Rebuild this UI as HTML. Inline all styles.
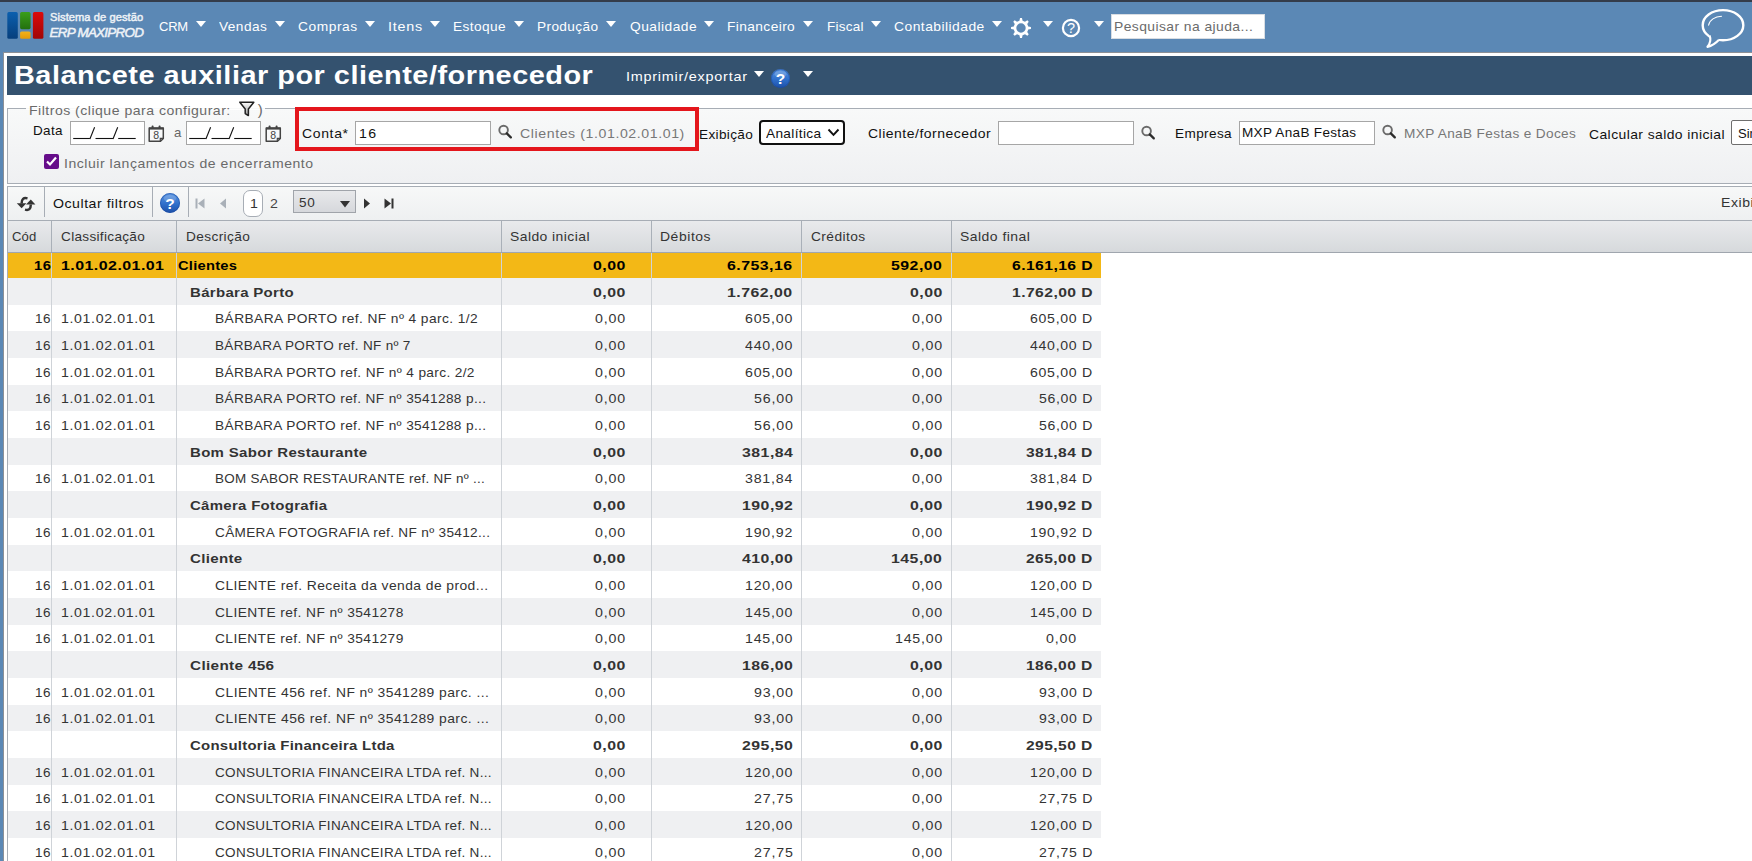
<!DOCTYPE html>
<html><head><meta charset="utf-8"><title>Balancete auxiliar por cliente/fornecedor</title>
<style>
html,body{margin:0;padding:0;}
body{width:1752px;height:861px;overflow:hidden;position:relative;background:#fff;font-family:"Liberation Sans",sans-serif;}
.r{position:absolute;display:block;}
.t{position:absolute;white-space:nowrap;line-height:1.117;transform-origin:0 0;font-family:"Liberation Sans",sans-serif;}
</style></head><body>
<div class="r" style="left:0px;top:0px;width:1752px;height:2px;background:#343c4a"></div>
<div class="r" style="left:0px;top:2px;width:1752px;height:50px;background:#5b88b5"></div>
<svg class="r" style="left:6px;top:11px;" width="40" height="30" viewBox="0 0 40 30"><defs>
<linearGradient id="lb" x1="0" y1="0" x2="0" y2="1"><stop offset="0" stop-color="#0a5fae"/><stop offset="1" stop-color="#073f7c"/></linearGradient>
<linearGradient id="lg" x1="0" y1="0" x2="0" y2="1"><stop offset="0" stop-color="#3a9e1a"/><stop offset="1" stop-color="#23700f"/></linearGradient>
<linearGradient id="ly" x1="0" y1="0" x2="0" y2="1"><stop offset="0" stop-color="#f3b21a"/><stop offset="1" stop-color="#e29a0a"/></linearGradient>
<linearGradient id="lr" x1="0" y1="0" x2="0" y2="1"><stop offset="0" stop-color="#dc0a0a"/><stop offset="1" stop-color="#a00606"/></linearGradient>
</defs>
<rect x="1.3" y="1.1" width="10.5" height="26.7" rx="1.6" fill="url(#lb)"/>
<rect x="14.1" y="1.1" width="10.5" height="17.1" rx="1.6" fill="url(#lg)"/>
<rect x="14.1" y="20.5" width="10.5" height="7.3" rx="1.6" fill="url(#ly)"/>
<rect x="26.9" y="1.1" width="10.5" height="26.7" rx="1.6" fill="url(#lr)"/></svg>
<div class="t" style="left:50.00px;top:11.04px;font-size:11px;letter-spacing:0.062px;color:#eef2f6;transform:scaleX(1.0109);-webkit-text-stroke:0.45px #eef2f6;">Sistema de gestão</div>
<div class="t" style="left:49.50px;top:25.28px;font-size:13.5px;letter-spacing:-0.773px;color:#eef2f7;font-style:italic;-webkit-text-stroke:0.5px #eef2f7;">ERP MAXIPROD</div>
<div class="t" style="left:159.00px;top:20.23px;font-size:13px;letter-spacing:-0.250px;color:#ffffff;">CRM</div>
<svg class="r" style="left:196px;top:21px;" width="10" height="6" viewBox="0 0 10 6"><polygon points="0,0 10,0 5.0,6" fill="#fff"/></svg>
<div class="t" style="left:219.30px;top:20.23px;font-size:13px;letter-spacing:0.439px;color:#ffffff;transform:scaleX(1.0505);">Vendas</div>
<svg class="r" style="left:275px;top:21px;" width="10" height="6" viewBox="0 0 10 6"><polygon points="0,0 10,0 5.0,6" fill="#fff"/></svg>
<div class="t" style="left:298.00px;top:20.23px;font-size:13px;letter-spacing:0.522px;color:#ffffff;transform:scaleX(1.0594);">Compras</div>
<svg class="r" style="left:365px;top:21px;" width="10" height="6" viewBox="0 0 10 6"><polygon points="0,0 10,0 5.0,6" fill="#fff"/></svg>
<div class="t" style="left:388.00px;top:20.23px;font-size:13px;letter-spacing:0.720px;color:#ffffff;transform:scaleX(1.1019);">Itens</div>
<svg class="r" style="left:430px;top:21px;" width="10" height="6" viewBox="0 0 10 6"><polygon points="0,0 10,0 5.0,6" fill="#fff"/></svg>
<div class="t" style="left:453.40px;top:20.23px;font-size:13px;letter-spacing:0.394px;color:#ffffff;transform:scaleX(1.0496);">Estoque</div>
<svg class="r" style="left:514px;top:21px;" width="10" height="6" viewBox="0 0 10 6"><polygon points="0,0 10,0 5.0,6" fill="#fff"/></svg>
<div class="t" style="left:537.30px;top:20.23px;font-size:13px;letter-spacing:0.373px;color:#ffffff;transform:scaleX(1.0469);">Produção</div>
<svg class="r" style="left:606px;top:21px;" width="10" height="6" viewBox="0 0 10 6"><polygon points="0,0 10,0 5.0,6" fill="#fff"/></svg>
<div class="t" style="left:629.70px;top:20.23px;font-size:13px;letter-spacing:0.446px;color:#ffffff;transform:scaleX(1.0602);">Qualidade</div>
<svg class="r" style="left:704px;top:21px;" width="10" height="6" viewBox="0 0 10 6"><polygon points="0,0 10,0 5.0,6" fill="#fff"/></svg>
<div class="t" style="left:727.20px;top:20.23px;font-size:13px;letter-spacing:0.381px;color:#ffffff;transform:scaleX(1.0564);">Financeiro</div>
<svg class="r" style="left:803px;top:21px;" width="10" height="6" viewBox="0 0 10 6"><polygon points="0,0 10,0 5.0,6" fill="#fff"/></svg>
<div class="t" style="left:826.50px;top:20.23px;font-size:13px;letter-spacing:0.246px;color:#ffffff;transform:scaleX(1.0361);">Fiscal</div>
<svg class="r" style="left:870.7px;top:21px;" width="10" height="6" viewBox="0 0 10 6"><polygon points="0,0 10,0 5.0,6" fill="#fff"/></svg>
<div class="t" style="left:894.30px;top:20.23px;font-size:13px;letter-spacing:0.436px;color:#ffffff;transform:scaleX(1.0658);">Contabilidade</div>
<svg class="r" style="left:992px;top:21px;" width="10" height="6" viewBox="0 0 10 6"><polygon points="0,0 10,0 5.0,6" fill="#fff"/></svg>
<svg class="r" style="left:1009px;top:16px;" width="24" height="24" viewBox="0 0 24 24"><path d="M10.43,4.77 L11.01,2.05 L12.99,2.05 L13.57,4.77 L16.00,5.77 L18.34,4.26 L19.74,5.66 L18.23,8.00 L19.23,10.43 L21.95,11.01 L21.95,12.99 L19.23,13.57 L18.23,16.00 L19.74,18.34 L18.34,19.74 L16.00,18.23 L13.57,19.23 L12.99,21.95 L11.01,21.95 L10.43,19.23 L8.00,18.23 L5.66,19.74 L4.26,18.34 L5.77,16.00 L4.77,13.57 L2.05,12.99 L2.05,11.01 L4.77,10.43 L5.77,8.00 L4.26,5.66 L5.66,4.26 L8.00,5.77 Z M16.7,12 A4.7,4.7 0 1,0 7.3,12 A4.7,4.7 0 1,0 16.7,12 Z" fill="#fff" fill-rule="evenodd"/></svg>
<svg class="r" style="left:1043px;top:21px;" width="10" height="6" viewBox="0 0 10 6"><polygon points="0,0 10,0 5.0,6" fill="#fff"/></svg>
<svg class="r" style="left:1060px;top:17px;" width="22" height="22" viewBox="0 0 22 22"><circle cx="11" cy="11" r="8.1" fill="none" stroke="#fff" stroke-width="2.2"/><text x="11" y="16" text-anchor="middle" font-family="Liberation Sans" font-size="14.5" fill="#fff">?</text></svg>
<svg class="r" style="left:1094px;top:21px;" width="10" height="6" viewBox="0 0 10 6"><polygon points="0,0 10,0 5.0,6" fill="#fff"/></svg>
<div class="r" style="left:1111px;top:14px;width:154px;height:25px;background:#fff;box-sizing:border-box;border:1px solid #d8dde3"></div>
<div class="t" style="left:1114.00px;top:19.84px;font-size:13px;letter-spacing:0.405px;color:#6b6b6b;transform:scaleX(1.0663);">Pesquisar na ajuda...</div>
<svg class="r" style="left:1698px;top:6px;" width="52" height="44" viewBox="0 0 52 44"><ellipse cx="25" cy="19.2" rx="20.3" ry="15.1" fill="none" stroke="#fff" stroke-width="2.4"/><path d="M11.5,29.5 C13,33 12.5,37 9.5,40.8 C13.5,40 18,37 21,33.8 L20.5,31.2 L12.6,27.6 Z" fill="#5b88b5"/><path d="M11.5,29.5 C13,33 12.5,37 9.5,40.8 C13.5,40 18,37 21,33.8" fill="none" stroke="#fff" stroke-width="2.2" stroke-linejoin="round"/><path d="M10.6,19.2 C11.5,14 17,10.5 23.5,10.2" fill="none" stroke="#fff" stroke-width="1.1" stroke-linecap="round"/></svg>
<div class="r" style="left:0px;top:52px;width:1752px;height:809px;background:#5b88b5"></div>
<div class="r" style="left:3px;top:52px;width:1749px;height:809px;background:#fff;box-sizing:border-box;border-left:1px solid #8c9096;border-top:1px solid #8c9096"></div>
<div class="r" style="left:7px;top:56px;width:1745px;height:39px;background:#34526f"></div>
<div class="t" style="left:14.20px;top:61.67px;font-size:25px;letter-spacing:0.443px;color:#fff;transform:scaleX(1.1548);font-weight:bold;">Balancete auxiliar por cliente/fornecedor</div>
<div class="t" style="left:625.70px;top:70.33px;font-size:13px;letter-spacing:0.674px;color:#fff;transform:scaleX(1.1098);">Imprimir/exportar</div>
<svg class="r" style="left:754px;top:71px;" width="10" height="6" viewBox="0 0 10 6"><polygon points="0,0 10,0 5.0,6" fill="#fff"/></svg>
<svg class="r" style="left:769.5px;top:67.5px;" width="21.0" height="21.0" viewBox="0 0 21.0 21.0"><defs><linearGradient id="bh780" x1="0" y1="0" x2="0" y2="1"><stop offset="0" stop-color="#5b95e0"/><stop offset="0.55" stop-color="#2f6fcb"/><stop offset="1" stop-color="#1d50a8"/></linearGradient></defs>
<circle cx="10.5" cy="10.5" r="9.5" fill="url(#bh780)"/>
<circle cx="10.5" cy="10.5" r="9.0" fill="none" stroke="#1a48a0" stroke-opacity="0.55" stroke-width="1"/>
<ellipse cx="10.5" cy="6.225" rx="5.89" ry="3.3249999999999997" fill="#fff" fill-opacity="0.18"/>
<text x="10.5" y="16.1" text-anchor="middle" font-family="Liberation Sans" font-weight="bold" font-size="15.5" fill="#fff">?</text></svg>
<svg class="r" style="left:803px;top:71px;" width="10" height="6" viewBox="0 0 10 6"><polygon points="0,0 10,0 5.0,6" fill="#fff"/></svg>
<div class="r" style="left:7px;top:108px;width:1745px;height:76px;box-sizing:border-box;border:1px solid #a7adb5;border-right:none;background:linear-gradient(#f8f9f9,#eff0f2)"></div>
<div class="r" style="left:26px;top:104px;width:239px;height:6px;background:#fff"></div>
<div class="r" style="left:26px;top:108px;width:239px;height:1px;background:linear-gradient(90deg,#f8f9f9,#f8f9f9)"></div>
<div class="t" style="left:29.20px;top:104.03px;font-size:13px;letter-spacing:0.454px;color:#6a6a6a;transform:scaleX(1.0818);">Filtros (clique para configurar:</div>
<svg class="r" style="left:238px;top:100px;" width="18" height="18" viewBox="0 0 18 18"><defs><linearGradient id="fg" x1="0" y1="0" x2="0" y2="1"><stop offset="0" stop-color="#fff"/><stop offset="1" stop-color="#999"/></linearGradient></defs><path d="M1.8,2.2 L15.8,2.2 L10.4,9 L10.4,15.6 L7.2,13.6 L7.2,9 Z" fill="url(#fg)" stroke="#222" stroke-width="1.5" stroke-linejoin="round"/></svg>
<div class="t" style="left:257.70px;top:101.72px;font-size:15px;letter-spacing:0.000px;color:#6a6a6a;">)</div>
<div class="t" style="left:33.20px;top:124.23px;font-size:13px;letter-spacing:0.327px;color:#111;transform:scaleX(1.0357);">Data</div>
<div class="r" style="left:70px;top:121px;width:75px;height:24px;box-sizing:border-box;background:#fff;border:1px solid #a6a6a6"></div>
<svg class="r" style="left:70px;top:121px;" width="75" height="24" viewBox="0 0 75 24"><line x1="3.1999999999999886" y1="17.5" x2="19.900000000000006" y2="17.5" stroke="#111" stroke-width="1.1"/><line x1="25.5" y1="17.5" x2="43" y2="17.5" stroke="#111" stroke-width="1.1"/><line x1="48.19999999999999" y1="17.5" x2="65.69999999999999" y2="17.5" stroke="#111" stroke-width="1.1"/><line x1="19.900000000000006" y1="18" x2="24.600000000000005" y2="6.3" stroke="#111" stroke-width="1.1"/><line x1="43" y1="18" x2="47.7" y2="6.3" stroke="#111" stroke-width="1.1"/></svg>
<svg class="r" style="left:148px;top:125px;" width="17" height="18" viewBox="0 0 17 18"><path d="M1.2,3 L15.3,3 L15.3,13.5 L12.5,16.3 L1.2,16.3 Z" fill="#fff" fill-opacity="0.35" stroke="#444" stroke-width="1.5" stroke-linejoin="round"/><line x1="1" y1="3.6" x2="15.5" y2="3.6" stroke="#444" stroke-width="2"/><rect x="3.6" y="0.6" width="2" height="3" rx="0.8" fill="#444"/><rect x="10.6" y="0.6" width="2" height="3" rx="0.8" fill="#444"/><path d="M12.3,16.2 L12.3,13.4 L15.2,13.4" fill="none" stroke="#444" stroke-width="1.2"/><text x="8.1" y="14.2" text-anchor="middle" font-family="Liberation Sans" font-size="10.5" fill="#444">8</text></svg>
<div class="t" style="left:173.80px;top:126.23px;font-size:13px;letter-spacing:0.000px;color:#666;transform:scaleX(1.0171);">a</div>
<div class="r" style="left:186px;top:121px;width:75px;height:24px;box-sizing:border-box;background:#fff;border:1px solid #a6a6a6"></div>
<svg class="r" style="left:186px;top:121px;" width="75" height="24" viewBox="0 0 75 24"><line x1="3.1999999999999886" y1="17.5" x2="19.900000000000006" y2="17.5" stroke="#111" stroke-width="1.1"/><line x1="25.5" y1="17.5" x2="43" y2="17.5" stroke="#111" stroke-width="1.1"/><line x1="48.19999999999999" y1="17.5" x2="65.69999999999999" y2="17.5" stroke="#111" stroke-width="1.1"/><line x1="19.900000000000006" y1="18" x2="24.600000000000005" y2="6.3" stroke="#111" stroke-width="1.1"/><line x1="43" y1="18" x2="47.7" y2="6.3" stroke="#111" stroke-width="1.1"/></svg>
<svg class="r" style="left:265px;top:125px;" width="17" height="18" viewBox="0 0 17 18"><path d="M1.2,3 L15.3,3 L15.3,13.5 L12.5,16.3 L1.2,16.3 Z" fill="#fff" fill-opacity="0.35" stroke="#444" stroke-width="1.5" stroke-linejoin="round"/><line x1="1" y1="3.6" x2="15.5" y2="3.6" stroke="#444" stroke-width="2"/><rect x="3.6" y="0.6" width="2" height="3" rx="0.8" fill="#444"/><rect x="10.6" y="0.6" width="2" height="3" rx="0.8" fill="#444"/><path d="M12.3,16.2 L12.3,13.4 L15.2,13.4" fill="none" stroke="#444" stroke-width="1.2"/><text x="8.1" y="14.2" text-anchor="middle" font-family="Liberation Sans" font-size="10.5" fill="#444">8</text></svg>
<div class="t" style="left:302.00px;top:126.93px;font-size:13px;letter-spacing:0.602px;color:#111;transform:scaleX(1.0757);">Conta*</div>
<div class="r" style="left:355px;top:121px;width:136px;height:24px;box-sizing:border-box;background:#fff;border:1px solid #a6a6a6"></div>
<div class="t" style="left:358.50px;top:126.93px;font-size:13px;letter-spacing:1.274px;color:#111;transform:scaleX(1.0879);">16</div>
<svg class="r" style="left:498px;top:124px;" width="16" height="16" viewBox="0 0 16 16"><circle cx="5.6" cy="6" r="4.3" fill="none" stroke="#6b6b6b" stroke-width="1.9"/><line x1="8.8" y1="9.4" x2="12.8" y2="13.4" stroke="#2b2b2b" stroke-width="2.3" stroke-linecap="round"/></svg>
<div class="t" style="left:520.20px;top:126.93px;font-size:13px;letter-spacing:0.532px;color:#777;transform:scaleX(1.0882);">Clientes (1.01.02.01.01)</div>
<div class="r" style="left:295px;top:107px;width:404px;height:44px;box-sizing:border-box;border:4px solid #e4161c"></div>
<div class="t" style="left:698.50px;top:127.93px;font-size:13px;letter-spacing:0.325px;color:#111;transform:scaleX(1.0461);">Exibição</div>
<div class="r" style="left:759px;top:120px;width:86px;height:25px;box-sizing:border-box;background:#fff;border:2px solid #111;border-radius:4px"></div>
<div class="t" style="left:765.50px;top:127.23px;font-size:13px;letter-spacing:0.317px;color:#111;transform:scaleX(1.0507);">Analítica</div>
<svg class="r" style="left:827px;top:128px;" width="14" height="9" viewBox="0 0 14 9"><polyline points="1.5,1.5 6.5,6.8 11.5,1.5" fill="none" stroke="#111" stroke-width="1.9"/></svg>
<div class="t" style="left:868.20px;top:127.23px;font-size:13px;letter-spacing:0.469px;color:#111;transform:scaleX(1.0751);">Cliente/fornecedor</div>
<div class="r" style="left:998px;top:121px;width:136px;height:24px;box-sizing:border-box;background:#fff;border:1px solid #a6a6a6"></div>
<svg class="r" style="left:1141px;top:125px;" width="16" height="16" viewBox="0 0 16 16"><circle cx="5.6" cy="6" r="4.3" fill="none" stroke="#6b6b6b" stroke-width="1.9"/><line x1="8.8" y1="9.4" x2="12.8" y2="13.4" stroke="#2b2b2b" stroke-width="2.3" stroke-linecap="round"/></svg>
<div class="t" style="left:1175.40px;top:127.23px;font-size:13px;letter-spacing:0.375px;color:#111;transform:scaleX(1.0433);">Empresa</div>
<div class="r" style="left:1239px;top:121px;width:136px;height:24px;box-sizing:border-box;background:#fff;border:1px solid #a6a6a6"></div>
<div class="t" style="left:1242.00px;top:126.23px;font-size:13px;letter-spacing:0.306px;color:#111;transform:scaleX(1.0407);">MXP AnaB Festas</div>
<svg class="r" style="left:1382px;top:124px;" width="16" height="16" viewBox="0 0 16 16"><circle cx="5.6" cy="6" r="4.3" fill="none" stroke="#6b6b6b" stroke-width="1.9"/><line x1="8.8" y1="9.4" x2="12.8" y2="13.4" stroke="#2b2b2b" stroke-width="2.3" stroke-linecap="round"/></svg>
<div class="t" style="left:1404.00px;top:127.33px;font-size:13px;letter-spacing:0.340px;color:#777;transform:scaleX(1.0477);">MXP AnaB Festas e Doces</div>
<div class="t" style="left:1588.90px;top:128.33px;font-size:13px;letter-spacing:0.393px;color:#111;transform:scaleX(1.0697);">Calcular saldo inicial</div>
<div class="r" style="left:1731px;top:120px;width:40px;height:25px;box-sizing:border-box;background:#fff;border:1px solid #6e6e6e;border-radius:2px"></div>
<div class="t" style="left:1738.00px;top:127.23px;font-size:13px;letter-spacing:0.000px;color:#111;">Sim</div>
<svg class="r" style="left:43px;top:153px;" width="17" height="17" viewBox="0 0 17 17"><rect x="1" y="1" width="15" height="15" rx="2" fill="#660d8a"/><polyline points="4,8.5 7,11.5 13,4.5" fill="none" stroke="#fff" stroke-width="2.2"/></svg>
<div class="t" style="left:64.20px;top:157.04px;font-size:13px;letter-spacing:0.498px;color:#6a6a6a;transform:scaleX(1.0791);">Incluir lançamentos de encerramento</div>
<div class="r" style="left:7px;top:186px;width:1745px;height:35px;box-sizing:border-box;border:1px solid #a7adb5;border-right:none;background:linear-gradient(#f7f8f8,#eef0f1)"></div>
<div class="r" style="left:44px;top:187px;width:1px;height:30px;background:#a7adb5"></div>
<div class="r" style="left:152px;top:187px;width:1px;height:30px;background:#a7adb5"></div>
<div class="r" style="left:188px;top:187px;width:1px;height:30px;background:#a7adb5"></div>
<svg class="r" style="left:15px;top:195px;" width="22" height="18" viewBox="0 0 22 18"><path d="M12.5,3.4 C8.5,2.4 6.6,4 6.6,8.6" fill="none" stroke="#333" stroke-width="2.5"/><polygon points="1.8,8.2 11.4,8.2 6.6,13.2" fill="#333"/><path d="M10,14.6 C14,15.6 15.8,14 15.8,9.4" fill="none" stroke="#333" stroke-width="2.5"/><polygon points="11,9.6 20.4,9.6 15.8,4.6" fill="#333"/></svg>
<div class="t" style="left:52.80px;top:197.24px;font-size:13px;letter-spacing:0.479px;color:#111;transform:scaleX(1.0877);">Ocultar filtros</div>
<svg class="r" style="left:159px;top:191.8px;" width="22" height="22" viewBox="0 0 22 22"><defs><linearGradient id="bh170" x1="0" y1="0" x2="0" y2="1"><stop offset="0" stop-color="#5b95e0"/><stop offset="0.55" stop-color="#2f6fcb"/><stop offset="1" stop-color="#1d50a8"/></linearGradient></defs>
<circle cx="11" cy="11" r="10" fill="url(#bh170)"/>
<circle cx="11" cy="11" r="9.5" fill="none" stroke="#1a48a0" stroke-opacity="0.55" stroke-width="1"/>
<ellipse cx="11" cy="6.5" rx="6.2" ry="3.5" fill="#fff" fill-opacity="0.18"/>
<text x="11" y="16.6" text-anchor="middle" font-family="Liberation Sans" font-weight="bold" font-size="15.5" fill="#fff">?</text></svg>
<svg class="r" style="left:195px;top:198px;" width="10" height="11" viewBox="0 0 10 11"><rect x="0.5" y="0.5" width="2" height="10" fill="#a9b0b8"/><polygon points="9.5,0.5 9.5,10.5 3,5.5" fill="#a9b0b8"/></svg>
<svg class="r" style="left:219px;top:198px;" width="8" height="11" viewBox="0 0 8 11"><polygon points="7,0.5 7,10.5 1,5.5" fill="#a9b0b8"/></svg>
<div class="r" style="left:243px;top:190px;width:20px;height:27px;box-sizing:border-box;background:#fff;border:1px solid #a7adb5;border-radius:7px"></div>
<div class="t" style="left:249.80px;top:197.24px;font-size:13px;letter-spacing:0.000px;color:#333;transform:scaleX(1.0879);">1</div>
<div class="t" style="left:270.00px;top:197.24px;font-size:13px;letter-spacing:0.000px;color:#444;transform:scaleX(1.0879);">2</div>
<div class="r" style="left:293px;top:190px;width:63px;height:23px;box-sizing:border-box;border:1px solid #a0a4aa;background:linear-gradient(#e8e9eb,#d6d8dc)"></div>
<div class="t" style="left:298.50px;top:196.24px;font-size:13px;letter-spacing:0.588px;color:#333;transform:scaleX(1.0406);">50</div>
<svg class="r" style="left:340px;top:201px;" width="10" height="6.5" viewBox="0 0 10 6.5"><polygon points="0,0 10,0 5.0,6.5" fill="#333"/></svg>
<svg class="r" style="left:363px;top:198px;" width="8" height="11" viewBox="0 0 8 11"><polygon points="1,0.5 1,10.5 7,5.5" fill="#333"/></svg>
<svg class="r" style="left:384px;top:198px;" width="10" height="11" viewBox="0 0 10 11"><polygon points="0.5,0.5 0.5,10.5 7,5.5" fill="#333"/><rect x="7.5" y="0.5" width="2" height="10" fill="#333"/></svg>
<div class="t" style="left:1720.80px;top:196.33px;font-size:13px;letter-spacing:0.543px;color:#333;transform:scaleX(1.0769);">Exibi</div>
<div class="r" style="left:7px;top:221px;width:1745px;height:32px;box-sizing:border-box;border-left:1px solid #a7adb5;border-bottom:1px solid #a0a6ae;background:linear-gradient(#e9eaec,#d6d9dc)"></div>
<div class="r" style="left:51px;top:221px;width:1px;height:31px;background:#a9b0b8"></div>
<div class="r" style="left:176px;top:221px;width:1px;height:31px;background:#a9b0b8"></div>
<div class="r" style="left:501px;top:221px;width:1px;height:31px;background:#a9b0b8"></div>
<div class="r" style="left:651px;top:221px;width:1px;height:31px;background:#a9b0b8"></div>
<div class="r" style="left:801px;top:221px;width:1px;height:31px;background:#a9b0b8"></div>
<div class="r" style="left:951px;top:221px;width:1px;height:31px;background:#a9b0b8"></div>
<div class="r" style="left:7px;top:253px;width:1px;height:608px;background:#a7adb5"></div>
<div class="t" style="left:11.80px;top:230.04px;font-size:13px;letter-spacing:0.112px;color:#333;transform:scaleX(1.0094);">Cód</div>
<div class="t" style="left:60.80px;top:230.04px;font-size:13px;letter-spacing:0.293px;color:#333;transform:scaleX(1.0460);">Classificação</div>
<div class="t" style="left:185.50px;top:230.04px;font-size:13px;letter-spacing:0.369px;color:#333;transform:scaleX(1.0511);">Descrição</div>
<div class="t" style="left:510.40px;top:230.04px;font-size:13px;letter-spacing:0.408px;color:#333;transform:scaleX(1.0708);">Saldo inicial</div>
<div class="t" style="left:660.20px;top:230.04px;font-size:13px;letter-spacing:0.523px;color:#333;transform:scaleX(1.0713);">Débitos</div>
<div class="t" style="left:810.60px;top:230.04px;font-size:13px;letter-spacing:0.403px;color:#333;transform:scaleX(1.0581);">Créditos</div>
<div class="t" style="left:960.30px;top:230.04px;font-size:13px;letter-spacing:0.446px;color:#333;transform:scaleX(1.0734);">Saldo final</div>
<div class="r" style="left:8px;top:253px;width:1093px;height:25px;background:#f3b816"></div>
<div class="r" style="left:8px;top:278px;width:1093px;height:27px;background:#eff0f2"></div>
<div class="r" style="left:8px;top:305px;width:1093px;height:26px;background:#ffffff"></div>
<div class="r" style="left:8px;top:331px;width:1093px;height:27px;background:#eff0f2"></div>
<div class="r" style="left:8px;top:358px;width:1093px;height:27px;background:#ffffff"></div>
<div class="r" style="left:8px;top:385px;width:1093px;height:26px;background:#eff0f2"></div>
<div class="r" style="left:8px;top:411px;width:1093px;height:27px;background:#ffffff"></div>
<div class="r" style="left:8px;top:438px;width:1093px;height:27px;background:#eff0f2"></div>
<div class="r" style="left:8px;top:465px;width:1093px;height:26px;background:#ffffff"></div>
<div class="r" style="left:8px;top:491px;width:1093px;height:27px;background:#eff0f2"></div>
<div class="r" style="left:8px;top:518px;width:1093px;height:27px;background:#ffffff"></div>
<div class="r" style="left:8px;top:545px;width:1093px;height:26px;background:#eff0f2"></div>
<div class="r" style="left:8px;top:571px;width:1093px;height:27px;background:#ffffff"></div>
<div class="r" style="left:8px;top:598px;width:1093px;height:27px;background:#eff0f2"></div>
<div class="r" style="left:8px;top:625px;width:1093px;height:26px;background:#ffffff"></div>
<div class="r" style="left:8px;top:651px;width:1093px;height:27px;background:#eff0f2"></div>
<div class="r" style="left:8px;top:678px;width:1093px;height:27px;background:#ffffff"></div>
<div class="r" style="left:8px;top:705px;width:1093px;height:26px;background:#eff0f2"></div>
<div class="r" style="left:8px;top:731px;width:1093px;height:27px;background:#ffffff"></div>
<div class="r" style="left:8px;top:758px;width:1093px;height:27px;background:#eff0f2"></div>
<div class="r" style="left:8px;top:785px;width:1093px;height:26px;background:#ffffff"></div>
<div class="r" style="left:8px;top:811px;width:1093px;height:27px;background:#eff0f2"></div>
<div class="r" style="left:8px;top:838px;width:1093px;height:27px;background:#ffffff"></div>
<div class="r" style="left:51px;top:253px;width:1px;height:608px;background:#cfd3d8"></div>
<div class="r" style="left:176px;top:253px;width:1px;height:608px;background:#cfd3d8"></div>
<div class="r" style="left:501px;top:253px;width:1px;height:608px;background:#cfd3d8"></div>
<div class="r" style="left:651px;top:253px;width:1px;height:608px;background:#cfd3d8"></div>
<div class="r" style="left:801px;top:253px;width:1px;height:608px;background:#cfd3d8"></div>
<div class="r" style="left:951px;top:253px;width:1px;height:608px;background:#cfd3d8"></div>
<div class="r" style="left:50px;top:253px;width:2px;height:25px;background:transparent"></div>
<div class="t" style="left:33.60px;top:259.24px;font-size:13px;letter-spacing:0.469px;color:#000;transform:scaleX(1.1357);font-weight:bold;">16</div>
<div class="t" style="left:60.80px;top:259.24px;font-size:13px;letter-spacing:0.352px;color:#000;transform:scaleX(1.2302);font-weight:bold;">1.01.02.01.01</div>
<div class="t" style="left:178.00px;top:259.24px;font-size:13px;letter-spacing:0.223px;color:#000;transform:scaleX(1.1295);font-weight:bold;">Clientes</div>
<div class="t" style="left:593.02px;top:259.24px;font-size:13px;letter-spacing:0.429px;color:#000;transform:scaleX(1.2203);font-weight:bold;">0,00</div>
<div class="t" style="left:727.48px;top:259.24px;font-size:13px;letter-spacing:0.374px;color:#000;transform:scaleX(1.2241);font-weight:bold;">6.753,16</div>
<div class="t" style="left:891.45px;top:259.24px;font-size:13px;letter-spacing:0.401px;color:#000;transform:scaleX(1.2178);font-weight:bold;">592,00</div>
<div class="t" style="left:1012.05px;top:259.24px;font-size:13px;letter-spacing:0.342px;color:#000;transform:scaleX(1.2084);font-weight:bold;">6.161,16 D</div>
<div class="t" style="left:190.30px;top:286.24px;font-size:13px;letter-spacing:0.263px;color:#333;transform:scaleX(1.1535);font-weight:bold;">Bárbara Porto</div>
<div class="t" style="left:593.02px;top:286.24px;font-size:13px;letter-spacing:0.429px;color:#333;transform:scaleX(1.2203);font-weight:bold;">0,00</div>
<div class="t" style="left:727.48px;top:286.24px;font-size:13px;letter-spacing:0.374px;color:#333;transform:scaleX(1.2241);font-weight:bold;">1.762,00</div>
<div class="t" style="left:909.92px;top:286.24px;font-size:13px;letter-spacing:0.429px;color:#333;transform:scaleX(1.2203);font-weight:bold;">0,00</div>
<div class="t" style="left:1012.05px;top:286.24px;font-size:13px;letter-spacing:0.342px;color:#333;transform:scaleX(1.2084);font-weight:bold;">1.762,00 D</div>
<div class="t" style="left:35.00px;top:312.24px;font-size:13px;letter-spacing:0.540px;color:#333;transform:scaleX(1.0372);">16</div>
<div class="t" style="left:60.80px;top:312.24px;font-size:13px;letter-spacing:0.583px;color:#333;transform:scaleX(1.0880);">1.01.02.01.01</div>
<div class="t" style="left:215.40px;top:312.24px;font-size:13px;letter-spacing:0.387px;color:#333;transform:scaleX(1.0577);">BÁRBARA PORTO ref. NF nº 4 parc. 1/2</div>
<div class="t" style="left:595.24px;top:312.24px;font-size:13px;letter-spacing:0.782px;color:#333;transform:scaleX(1.0929);">0,00</div>
<div class="t" style="left:745.18px;top:312.24px;font-size:13px;letter-spacing:0.724px;color:#333;transform:scaleX(1.0911);">605,00</div>
<div class="t" style="left:912.14px;top:312.24px;font-size:13px;letter-spacing:0.782px;color:#333;transform:scaleX(1.0929);">0,00</div>
<div class="t" style="left:1030.36px;top:312.24px;font-size:13px;letter-spacing:0.643px;color:#333;transform:scaleX(1.0854);">605,00 D</div>
<div class="t" style="left:35.00px;top:339.24px;font-size:13px;letter-spacing:0.540px;color:#333;transform:scaleX(1.0372);">16</div>
<div class="t" style="left:60.80px;top:339.24px;font-size:13px;letter-spacing:0.583px;color:#333;transform:scaleX(1.0880);">1.01.02.01.01</div>
<div class="t" style="left:215.40px;top:339.24px;font-size:13px;letter-spacing:0.289px;color:#333;transform:scaleX(1.0401);">BÁRBARA PORTO ref. NF nº 7</div>
<div class="t" style="left:595.24px;top:339.24px;font-size:13px;letter-spacing:0.782px;color:#333;transform:scaleX(1.0929);">0,00</div>
<div class="t" style="left:745.18px;top:339.24px;font-size:13px;letter-spacing:0.724px;color:#333;transform:scaleX(1.0911);">440,00</div>
<div class="t" style="left:912.14px;top:339.24px;font-size:13px;letter-spacing:0.782px;color:#333;transform:scaleX(1.0929);">0,00</div>
<div class="t" style="left:1030.36px;top:339.24px;font-size:13px;letter-spacing:0.643px;color:#333;transform:scaleX(1.0854);">440,00 D</div>
<div class="t" style="left:35.00px;top:366.24px;font-size:13px;letter-spacing:0.540px;color:#333;transform:scaleX(1.0372);">16</div>
<div class="t" style="left:60.80px;top:366.24px;font-size:13px;letter-spacing:0.583px;color:#333;transform:scaleX(1.0880);">1.01.02.01.01</div>
<div class="t" style="left:215.40px;top:366.24px;font-size:13px;letter-spacing:0.344px;color:#333;transform:scaleX(1.0514);">BÁRBARA PORTO ref. NF nº 4 parc. 2/2</div>
<div class="t" style="left:595.24px;top:366.24px;font-size:13px;letter-spacing:0.782px;color:#333;transform:scaleX(1.0929);">0,00</div>
<div class="t" style="left:745.18px;top:366.24px;font-size:13px;letter-spacing:0.724px;color:#333;transform:scaleX(1.0911);">605,00</div>
<div class="t" style="left:912.14px;top:366.24px;font-size:13px;letter-spacing:0.782px;color:#333;transform:scaleX(1.0929);">0,00</div>
<div class="t" style="left:1030.36px;top:366.24px;font-size:13px;letter-spacing:0.643px;color:#333;transform:scaleX(1.0854);">605,00 D</div>
<div class="t" style="left:35.00px;top:392.24px;font-size:13px;letter-spacing:0.540px;color:#333;transform:scaleX(1.0372);">16</div>
<div class="t" style="left:60.80px;top:392.24px;font-size:13px;letter-spacing:0.583px;color:#333;transform:scaleX(1.0880);">1.01.02.01.01</div>
<div class="t" style="left:215.40px;top:392.24px;font-size:13px;letter-spacing:0.345px;color:#333;transform:scaleX(1.0505);">BÁRBARA PORTO ref. NF nº 3541288 p...</div>
<div class="t" style="left:595.24px;top:392.24px;font-size:13px;letter-spacing:0.782px;color:#333;transform:scaleX(1.0929);">0,00</div>
<div class="t" style="left:753.76px;top:392.24px;font-size:13px;letter-spacing:0.746px;color:#333;transform:scaleX(1.0918);">56,00</div>
<div class="t" style="left:912.14px;top:392.24px;font-size:13px;letter-spacing:0.782px;color:#333;transform:scaleX(1.0929);">0,00</div>
<div class="t" style="left:1039.20px;top:392.24px;font-size:13px;letter-spacing:0.624px;color:#333;transform:scaleX(1.0823);">56,00 D</div>
<div class="t" style="left:35.00px;top:419.24px;font-size:13px;letter-spacing:0.540px;color:#333;transform:scaleX(1.0372);">16</div>
<div class="t" style="left:60.80px;top:419.24px;font-size:13px;letter-spacing:0.583px;color:#333;transform:scaleX(1.0880);">1.01.02.01.01</div>
<div class="t" style="left:215.40px;top:419.24px;font-size:13px;letter-spacing:0.345px;color:#333;transform:scaleX(1.0505);">BÁRBARA PORTO ref. NF nº 3541288 p...</div>
<div class="t" style="left:595.24px;top:419.24px;font-size:13px;letter-spacing:0.782px;color:#333;transform:scaleX(1.0929);">0,00</div>
<div class="t" style="left:753.76px;top:419.24px;font-size:13px;letter-spacing:0.746px;color:#333;transform:scaleX(1.0918);">56,00</div>
<div class="t" style="left:912.14px;top:419.24px;font-size:13px;letter-spacing:0.782px;color:#333;transform:scaleX(1.0929);">0,00</div>
<div class="t" style="left:1039.20px;top:419.24px;font-size:13px;letter-spacing:0.624px;color:#333;transform:scaleX(1.0823);">56,00 D</div>
<div class="t" style="left:190.30px;top:446.24px;font-size:13px;letter-spacing:0.270px;color:#333;transform:scaleX(1.1539);font-weight:bold;">Bom Sabor Restaurante</div>
<div class="t" style="left:593.02px;top:446.24px;font-size:13px;letter-spacing:0.429px;color:#333;transform:scaleX(1.2203);font-weight:bold;">0,00</div>
<div class="t" style="left:741.65px;top:446.24px;font-size:13px;letter-spacing:0.401px;color:#333;transform:scaleX(1.2178);font-weight:bold;">381,84</div>
<div class="t" style="left:909.92px;top:446.24px;font-size:13px;letter-spacing:0.429px;color:#333;transform:scaleX(1.2203);font-weight:bold;">0,00</div>
<div class="t" style="left:1026.21px;top:446.24px;font-size:13px;letter-spacing:0.352px;color:#333;transform:scaleX(1.2005);font-weight:bold;">381,84 D</div>
<div class="t" style="left:35.00px;top:472.24px;font-size:13px;letter-spacing:0.540px;color:#333;transform:scaleX(1.0372);">16</div>
<div class="t" style="left:60.80px;top:472.24px;font-size:13px;letter-spacing:0.583px;color:#333;transform:scaleX(1.0880);">1.01.02.01.01</div>
<div class="t" style="left:215.40px;top:472.24px;font-size:13px;letter-spacing:0.254px;color:#333;transform:scaleX(1.0354);">BOM SABOR RESTAURANTE ref. NF nº ...</div>
<div class="t" style="left:595.24px;top:472.24px;font-size:13px;letter-spacing:0.782px;color:#333;transform:scaleX(1.0929);">0,00</div>
<div class="t" style="left:745.18px;top:472.24px;font-size:13px;letter-spacing:0.724px;color:#333;transform:scaleX(1.0911);">381,84</div>
<div class="t" style="left:912.14px;top:472.24px;font-size:13px;letter-spacing:0.782px;color:#333;transform:scaleX(1.0929);">0,00</div>
<div class="t" style="left:1030.36px;top:472.24px;font-size:13px;letter-spacing:0.643px;color:#333;transform:scaleX(1.0854);">381,84 D</div>
<div class="t" style="left:190.30px;top:499.24px;font-size:13px;letter-spacing:0.259px;color:#333;transform:scaleX(1.1517);font-weight:bold;">Câmera Fotografia</div>
<div class="t" style="left:593.02px;top:499.24px;font-size:13px;letter-spacing:0.429px;color:#333;transform:scaleX(1.2203);font-weight:bold;">0,00</div>
<div class="t" style="left:741.65px;top:499.24px;font-size:13px;letter-spacing:0.401px;color:#333;transform:scaleX(1.2178);font-weight:bold;">190,92</div>
<div class="t" style="left:909.92px;top:499.24px;font-size:13px;letter-spacing:0.429px;color:#333;transform:scaleX(1.2203);font-weight:bold;">0,00</div>
<div class="t" style="left:1026.21px;top:499.24px;font-size:13px;letter-spacing:0.352px;color:#333;transform:scaleX(1.2005);font-weight:bold;">190,92 D</div>
<div class="t" style="left:35.00px;top:526.24px;font-size:13px;letter-spacing:0.540px;color:#333;transform:scaleX(1.0372);">16</div>
<div class="t" style="left:60.80px;top:526.24px;font-size:13px;letter-spacing:0.583px;color:#333;transform:scaleX(1.0880);">1.01.02.01.01</div>
<div class="t" style="left:215.40px;top:526.24px;font-size:13px;letter-spacing:0.318px;color:#333;transform:scaleX(1.0455);">CÂMERA FOTOGRAFIA ref. NF nº 35412...</div>
<div class="t" style="left:595.24px;top:526.24px;font-size:13px;letter-spacing:0.782px;color:#333;transform:scaleX(1.0929);">0,00</div>
<div class="t" style="left:745.18px;top:526.24px;font-size:13px;letter-spacing:0.724px;color:#333;transform:scaleX(1.0911);">190,92</div>
<div class="t" style="left:912.14px;top:526.24px;font-size:13px;letter-spacing:0.782px;color:#333;transform:scaleX(1.0929);">0,00</div>
<div class="t" style="left:1030.36px;top:526.24px;font-size:13px;letter-spacing:0.643px;color:#333;transform:scaleX(1.0854);">190,92 D</div>
<div class="t" style="left:190.30px;top:552.24px;font-size:13px;letter-spacing:0.274px;color:#333;transform:scaleX(1.1609);font-weight:bold;">Cliente</div>
<div class="t" style="left:593.02px;top:552.24px;font-size:13px;letter-spacing:0.429px;color:#333;transform:scaleX(1.2203);font-weight:bold;">0,00</div>
<div class="t" style="left:741.65px;top:552.24px;font-size:13px;letter-spacing:0.401px;color:#333;transform:scaleX(1.2178);font-weight:bold;">410,00</div>
<div class="t" style="left:891.45px;top:552.24px;font-size:13px;letter-spacing:0.401px;color:#333;transform:scaleX(1.2178);font-weight:bold;">145,00</div>
<div class="t" style="left:1026.21px;top:552.24px;font-size:13px;letter-spacing:0.352px;color:#333;transform:scaleX(1.2005);font-weight:bold;">265,00 D</div>
<div class="t" style="left:35.00px;top:579.24px;font-size:13px;letter-spacing:0.540px;color:#333;transform:scaleX(1.0372);">16</div>
<div class="t" style="left:60.80px;top:579.24px;font-size:13px;letter-spacing:0.583px;color:#333;transform:scaleX(1.0880);">1.01.02.01.01</div>
<div class="t" style="left:215.40px;top:579.24px;font-size:13px;letter-spacing:0.404px;color:#333;transform:scaleX(1.0654);">CLIENTE ref. Receita da venda de prod...</div>
<div class="t" style="left:595.24px;top:579.24px;font-size:13px;letter-spacing:0.782px;color:#333;transform:scaleX(1.0929);">0,00</div>
<div class="t" style="left:745.18px;top:579.24px;font-size:13px;letter-spacing:0.724px;color:#333;transform:scaleX(1.0911);">120,00</div>
<div class="t" style="left:912.14px;top:579.24px;font-size:13px;letter-spacing:0.782px;color:#333;transform:scaleX(1.0929);">0,00</div>
<div class="t" style="left:1030.36px;top:579.24px;font-size:13px;letter-spacing:0.643px;color:#333;transform:scaleX(1.0854);">120,00 D</div>
<div class="t" style="left:35.00px;top:606.24px;font-size:13px;letter-spacing:0.540px;color:#333;transform:scaleX(1.0372);">16</div>
<div class="t" style="left:60.80px;top:606.24px;font-size:13px;letter-spacing:0.583px;color:#333;transform:scaleX(1.0880);">1.01.02.01.01</div>
<div class="t" style="left:215.40px;top:606.24px;font-size:13px;letter-spacing:0.393px;color:#333;transform:scaleX(1.0585);">CLIENTE ref. NF nº 3541278</div>
<div class="t" style="left:595.24px;top:606.24px;font-size:13px;letter-spacing:0.782px;color:#333;transform:scaleX(1.0929);">0,00</div>
<div class="t" style="left:745.18px;top:606.24px;font-size:13px;letter-spacing:0.724px;color:#333;transform:scaleX(1.0911);">145,00</div>
<div class="t" style="left:912.14px;top:606.24px;font-size:13px;letter-spacing:0.782px;color:#333;transform:scaleX(1.0929);">0,00</div>
<div class="t" style="left:1030.36px;top:606.24px;font-size:13px;letter-spacing:0.643px;color:#333;transform:scaleX(1.0854);">145,00 D</div>
<div class="t" style="left:35.00px;top:632.24px;font-size:13px;letter-spacing:0.540px;color:#333;transform:scaleX(1.0372);">16</div>
<div class="t" style="left:60.80px;top:632.24px;font-size:13px;letter-spacing:0.583px;color:#333;transform:scaleX(1.0880);">1.01.02.01.01</div>
<div class="t" style="left:215.40px;top:632.24px;font-size:13px;letter-spacing:0.393px;color:#333;transform:scaleX(1.0585);">CLIENTE ref. NF nº 3541279</div>
<div class="t" style="left:595.24px;top:632.24px;font-size:13px;letter-spacing:0.782px;color:#333;transform:scaleX(1.0929);">0,00</div>
<div class="t" style="left:745.18px;top:632.24px;font-size:13px;letter-spacing:0.724px;color:#333;transform:scaleX(1.0911);">145,00</div>
<div class="t" style="left:894.98px;top:632.24px;font-size:13px;letter-spacing:0.724px;color:#333;transform:scaleX(1.0911);">145,00</div>
<div class="t" style="left:1045.84px;top:632.24px;font-size:13px;letter-spacing:0.782px;color:#333;transform:scaleX(1.0929);">0,00</div>
<div class="t" style="left:190.30px;top:659.24px;font-size:13px;letter-spacing:0.285px;color:#333;transform:scaleX(1.1766);font-weight:bold;">Cliente 456</div>
<div class="t" style="left:593.02px;top:659.24px;font-size:13px;letter-spacing:0.429px;color:#333;transform:scaleX(1.2203);font-weight:bold;">0,00</div>
<div class="t" style="left:741.65px;top:659.24px;font-size:13px;letter-spacing:0.401px;color:#333;transform:scaleX(1.2178);font-weight:bold;">186,00</div>
<div class="t" style="left:909.92px;top:659.24px;font-size:13px;letter-spacing:0.429px;color:#333;transform:scaleX(1.2203);font-weight:bold;">0,00</div>
<div class="t" style="left:1026.21px;top:659.24px;font-size:13px;letter-spacing:0.352px;color:#333;transform:scaleX(1.2005);font-weight:bold;">186,00 D</div>
<div class="t" style="left:35.00px;top:686.24px;font-size:13px;letter-spacing:0.540px;color:#333;transform:scaleX(1.0372);">16</div>
<div class="t" style="left:60.80px;top:686.24px;font-size:13px;letter-spacing:0.583px;color:#333;transform:scaleX(1.0880);">1.01.02.01.01</div>
<div class="t" style="left:215.40px;top:686.24px;font-size:13px;letter-spacing:0.416px;color:#333;transform:scaleX(1.0675);">CLIENTE 456 ref. NF nº 3541289 parc. ...</div>
<div class="t" style="left:595.24px;top:686.24px;font-size:13px;letter-spacing:0.782px;color:#333;transform:scaleX(1.0929);">0,00</div>
<div class="t" style="left:753.76px;top:686.24px;font-size:13px;letter-spacing:0.746px;color:#333;transform:scaleX(1.0918);">93,00</div>
<div class="t" style="left:912.14px;top:686.24px;font-size:13px;letter-spacing:0.782px;color:#333;transform:scaleX(1.0929);">0,00</div>
<div class="t" style="left:1039.20px;top:686.24px;font-size:13px;letter-spacing:0.624px;color:#333;transform:scaleX(1.0823);">93,00 D</div>
<div class="t" style="left:35.00px;top:712.24px;font-size:13px;letter-spacing:0.540px;color:#333;transform:scaleX(1.0372);">16</div>
<div class="t" style="left:60.80px;top:712.24px;font-size:13px;letter-spacing:0.583px;color:#333;transform:scaleX(1.0880);">1.01.02.01.01</div>
<div class="t" style="left:215.40px;top:712.24px;font-size:13px;letter-spacing:0.416px;color:#333;transform:scaleX(1.0675);">CLIENTE 456 ref. NF nº 3541289 parc. ...</div>
<div class="t" style="left:595.24px;top:712.24px;font-size:13px;letter-spacing:0.782px;color:#333;transform:scaleX(1.0929);">0,00</div>
<div class="t" style="left:753.76px;top:712.24px;font-size:13px;letter-spacing:0.746px;color:#333;transform:scaleX(1.0918);">93,00</div>
<div class="t" style="left:912.14px;top:712.24px;font-size:13px;letter-spacing:0.782px;color:#333;transform:scaleX(1.0929);">0,00</div>
<div class="t" style="left:1039.20px;top:712.24px;font-size:13px;letter-spacing:0.624px;color:#333;transform:scaleX(1.0823);">93,00 D</div>
<div class="t" style="left:190.30px;top:739.24px;font-size:13px;letter-spacing:0.233px;color:#333;transform:scaleX(1.1485);font-weight:bold;">Consultoria Financeira Ltda</div>
<div class="t" style="left:593.02px;top:739.24px;font-size:13px;letter-spacing:0.429px;color:#333;transform:scaleX(1.2203);font-weight:bold;">0,00</div>
<div class="t" style="left:741.65px;top:739.24px;font-size:13px;letter-spacing:0.401px;color:#333;transform:scaleX(1.2178);font-weight:bold;">295,50</div>
<div class="t" style="left:909.92px;top:739.24px;font-size:13px;letter-spacing:0.429px;color:#333;transform:scaleX(1.2203);font-weight:bold;">0,00</div>
<div class="t" style="left:1026.21px;top:739.24px;font-size:13px;letter-spacing:0.352px;color:#333;transform:scaleX(1.2005);font-weight:bold;">295,50 D</div>
<div class="t" style="left:35.00px;top:766.24px;font-size:13px;letter-spacing:0.540px;color:#333;transform:scaleX(1.0372);">16</div>
<div class="t" style="left:60.80px;top:766.24px;font-size:13px;letter-spacing:0.583px;color:#333;transform:scaleX(1.0880);">1.01.02.01.01</div>
<div class="t" style="left:215.40px;top:766.24px;font-size:13px;letter-spacing:0.294px;color:#333;transform:scaleX(1.0415);">CONSULTORIA FINANCEIRA LTDA ref. N...</div>
<div class="t" style="left:595.24px;top:766.24px;font-size:13px;letter-spacing:0.782px;color:#333;transform:scaleX(1.0929);">0,00</div>
<div class="t" style="left:745.18px;top:766.24px;font-size:13px;letter-spacing:0.724px;color:#333;transform:scaleX(1.0911);">120,00</div>
<div class="t" style="left:912.14px;top:766.24px;font-size:13px;letter-spacing:0.782px;color:#333;transform:scaleX(1.0929);">0,00</div>
<div class="t" style="left:1030.36px;top:766.24px;font-size:13px;letter-spacing:0.643px;color:#333;transform:scaleX(1.0854);">120,00 D</div>
<div class="t" style="left:35.00px;top:792.24px;font-size:13px;letter-spacing:0.540px;color:#333;transform:scaleX(1.0372);">16</div>
<div class="t" style="left:60.80px;top:792.24px;font-size:13px;letter-spacing:0.583px;color:#333;transform:scaleX(1.0880);">1.01.02.01.01</div>
<div class="t" style="left:215.40px;top:792.24px;font-size:13px;letter-spacing:0.294px;color:#333;transform:scaleX(1.0415);">CONSULTORIA FINANCEIRA LTDA ref. N...</div>
<div class="t" style="left:595.24px;top:792.24px;font-size:13px;letter-spacing:0.782px;color:#333;transform:scaleX(1.0929);">0,00</div>
<div class="t" style="left:753.76px;top:792.24px;font-size:13px;letter-spacing:0.746px;color:#333;transform:scaleX(1.0918);">27,75</div>
<div class="t" style="left:912.14px;top:792.24px;font-size:13px;letter-spacing:0.782px;color:#333;transform:scaleX(1.0929);">0,00</div>
<div class="t" style="left:1039.20px;top:792.24px;font-size:13px;letter-spacing:0.624px;color:#333;transform:scaleX(1.0823);">27,75 D</div>
<div class="t" style="left:35.00px;top:819.24px;font-size:13px;letter-spacing:0.540px;color:#333;transform:scaleX(1.0372);">16</div>
<div class="t" style="left:60.80px;top:819.24px;font-size:13px;letter-spacing:0.583px;color:#333;transform:scaleX(1.0880);">1.01.02.01.01</div>
<div class="t" style="left:215.40px;top:819.24px;font-size:13px;letter-spacing:0.294px;color:#333;transform:scaleX(1.0415);">CONSULTORIA FINANCEIRA LTDA ref. N...</div>
<div class="t" style="left:595.24px;top:819.24px;font-size:13px;letter-spacing:0.782px;color:#333;transform:scaleX(1.0929);">0,00</div>
<div class="t" style="left:745.18px;top:819.24px;font-size:13px;letter-spacing:0.724px;color:#333;transform:scaleX(1.0911);">120,00</div>
<div class="t" style="left:912.14px;top:819.24px;font-size:13px;letter-spacing:0.782px;color:#333;transform:scaleX(1.0929);">0,00</div>
<div class="t" style="left:1030.36px;top:819.24px;font-size:13px;letter-spacing:0.643px;color:#333;transform:scaleX(1.0854);">120,00 D</div>
<div class="t" style="left:35.00px;top:846.24px;font-size:13px;letter-spacing:0.540px;color:#333;transform:scaleX(1.0372);">16</div>
<div class="t" style="left:60.80px;top:846.24px;font-size:13px;letter-spacing:0.583px;color:#333;transform:scaleX(1.0880);">1.01.02.01.01</div>
<div class="t" style="left:215.40px;top:846.24px;font-size:13px;letter-spacing:0.294px;color:#333;transform:scaleX(1.0415);">CONSULTORIA FINANCEIRA LTDA ref. N...</div>
<div class="t" style="left:595.24px;top:846.24px;font-size:13px;letter-spacing:0.782px;color:#333;transform:scaleX(1.0929);">0,00</div>
<div class="t" style="left:753.76px;top:846.24px;font-size:13px;letter-spacing:0.746px;color:#333;transform:scaleX(1.0918);">27,75</div>
<div class="t" style="left:912.14px;top:846.24px;font-size:13px;letter-spacing:0.782px;color:#333;transform:scaleX(1.0929);">0,00</div>
<div class="t" style="left:1039.20px;top:846.24px;font-size:13px;letter-spacing:0.624px;color:#333;transform:scaleX(1.0823);">27,75 D</div>
</body></html>
